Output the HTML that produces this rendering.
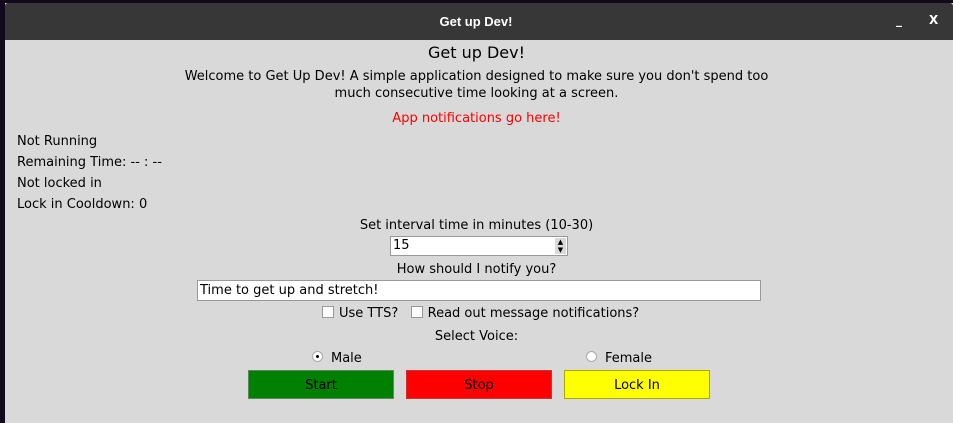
<!DOCTYPE html>
<html><head><style>
body{margin:0;width:953px;height:423px;background:#120a1c;position:relative;overflow:hidden;font-family:"DejaVu Sans",sans-serif;font-size:13px;color:#000}
.win{position:absolute;left:5px;top:3px;width:948px;height:420px;background:#d9d9d9}
.tb{position:absolute;left:0;top:0;width:100%;height:37px;background:#373737;border-radius:3px 3px 0 0;color:#fff;font-weight:bold;font-size:12px}
.a{position:absolute;white-space:nowrap}
.c{position:absolute;left:0;width:943px;text-align:center;white-space:nowrap}
.btn{position:absolute;top:367px;width:146px;height:29px;text-align:center;line-height:29px;box-sizing:border-box}
.cb{display:inline-block;width:10px;height:10px;background:#fff;border:1px solid #999;vertical-align:-1px;margin-right:5px}
</style></head><body>
<div class="win">
<div class="tb"><div class="c" style="top:11px;width:942px;font-family:'Liberation Sans Narrow','Liberation Sans',sans-serif;font-size:13px">Get up Dev!</div>
<div class="a" style="left:891px;top:10px">_</div><div class="a" style="left:924px;top:10px">X</div></div>
<div class="c" style="top:40px;font-size:16px">Get up Dev!</div>
<div class="c" style="top:66px">Welcome to Get Up Dev! A simple application designed to make sure you don't spend too</div>
<div class="c" style="top:83px">much consecutive time looking at a screen.</div>
<div class="c" style="top:108px;color:#f00">App notifications go here!</div>
<div class="a" style="left:12px;top:131px">Not Running</div>
<div class="a" style="left:12px;top:152px">Remaining Time: -- : --</div>
<div class="a" style="left:12px;top:173px">Not locked in</div>
<div class="a" style="left:12px;top:194px">Lock in Cooldown: 0</div>
<div class="c" style="top:215px">Set interval time in minutes (10-30)</div>
<div class="a" style="left:385px;top:233px;width:178px;height:20px;background:#fff;border:1px solid #999;box-sizing:border-box;padding-left:2px;line-height:18px">15
<div class="a" style="right:1px;top:1px;width:11px;height:16px;background:#d9d9d9;font-size:7px;line-height:8px;text-align:center">▲<br>▼</div></div>
<div class="c" style="top:259px">How should I notify you?</div>
<div class="a" style="left:192px;top:277px;width:564px;height:21px;background:#fff;border:1px solid #999;box-sizing:border-box;padding-left:2px;line-height:19px">Time to get up and stretch!</div>
<div class="a" style="left:317px;top:303px"><span class="cb"></span>Use TTS? &nbsp;&nbsp;<span class="cb"></span>Read out message notifications?</div>
<div class="c" style="top:326px">Select Voice:</div>
<div class="a" style="left:307px;top:348px"><span style="display:inline-block;width:9px;height:9px;border-radius:50%;background:#fff;border:1px solid #aaa;vertical-align:0;position:relative;margin-right:8px"><span style="position:absolute;left:3px;top:3px;width:3px;height:3px;border-radius:50%;background:#000"></span></span>Male</div>
<div class="a" style="left:581px;top:348px"><span style="display:inline-block;width:9px;height:9px;border-radius:50%;background:#fff;border:1px solid #aaa;vertical-align:0;margin-right:8px"></span>Female</div>
<div class="btn" style="left:243px;background:#008000;border:1px solid #5a8a5a">Start</div>
<div class="btn" style="left:401px;background:#f00;border:1px solid #c33">Stop</div>
<div class="btn" style="left:559px;background:#ff0;border:1px solid #aa0">Lock In</div>
</div>
</body></html>
